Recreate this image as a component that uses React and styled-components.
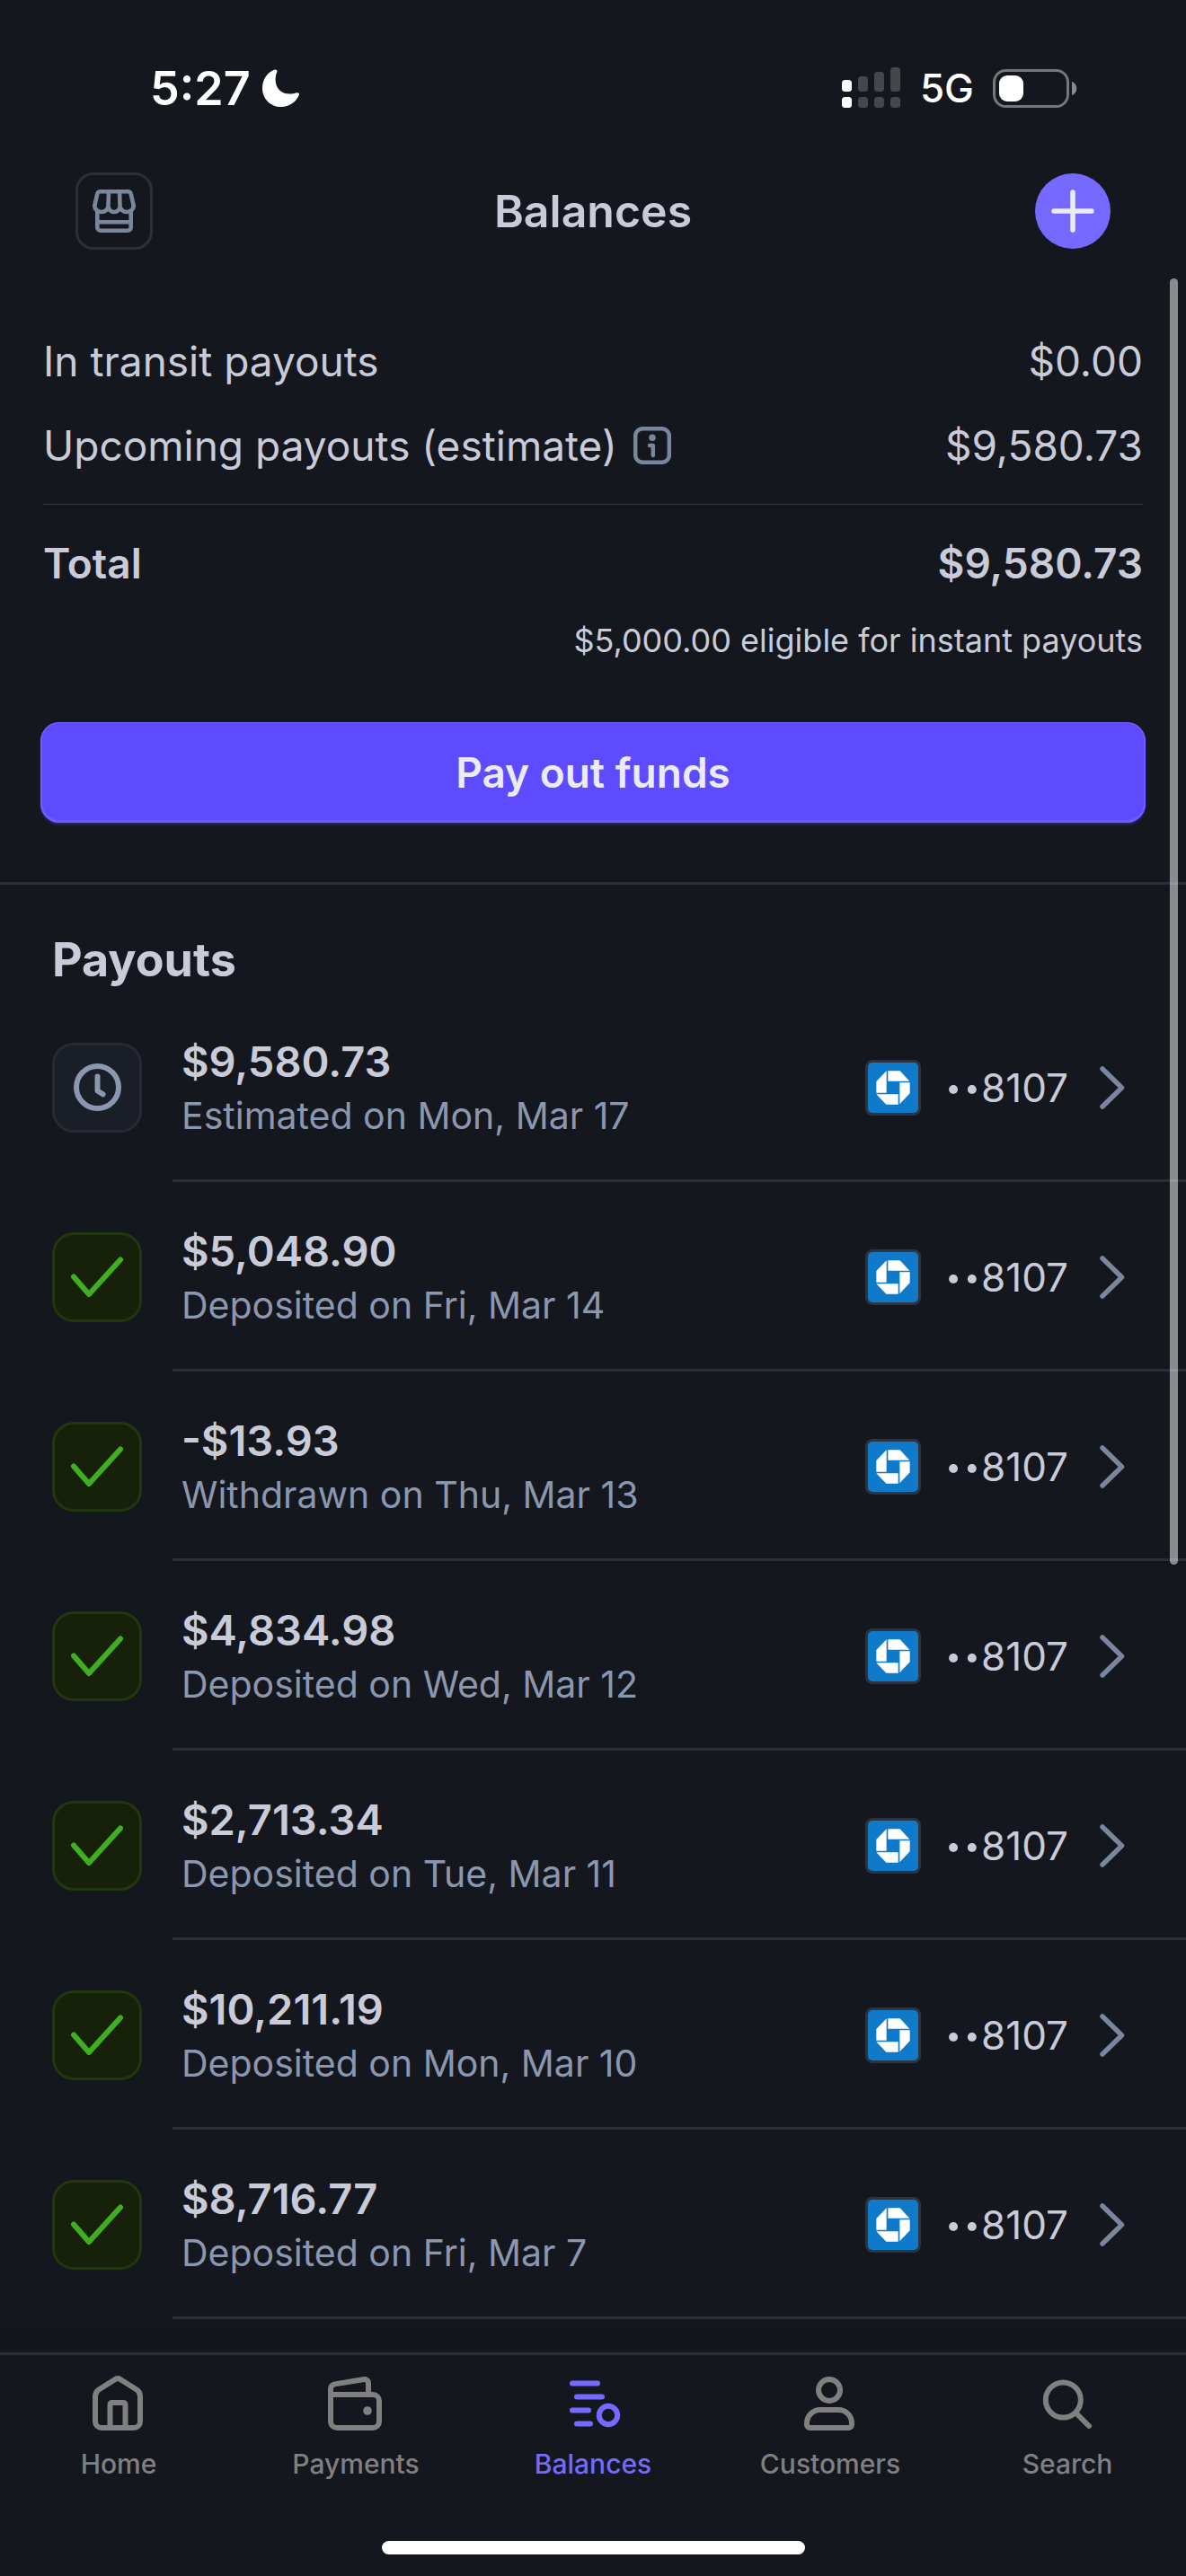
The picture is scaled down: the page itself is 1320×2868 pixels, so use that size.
import React from "react";
import styled, { createGlobalStyle, css } from "styled-components";

const BG = "#14171e";
const LINE = "#2c2f37";
const TEXT = "#c9cbd8";
const MUTED = "#8b97ae";
const ICON = "#7a869b";
const ACCENT = "#7569ff";
const GREY = "#808080";

const GlobalStyle = createGlobalStyle`
  *, *::before, *::after {
    box-sizing: border-box;
  }
  body {
    margin: 0;
    background: ${BG};
    color: ${TEXT};
    font-family: Inter, "Liberation Sans", sans-serif;
  }
  svg {
    display: block;
    flex: none;
  }
`;

const Screen = styled.div`
  min-height: 100vh;
  display: flex;
  flex-direction: column;
`;

const StatusBar = styled.div`
  display: flex;
  justify-content: space-between;
  align-items: center;
  height: 160px;
  padding: 36px 121px 0 167px;
  color: white;
`;

const StatusGroup = styled.div`
  display: flex;
  align-items: center;
  gap: ${props => props.$gap}px;
`;

const Clock = styled.time`
  font-size: 52px;
  font-weight: 600;
`;

const Network = styled.span`
  font-size: 44px;
  font-weight: 500;
`;

const Header = styled.header`
  display: grid;
  grid-template-columns: 1fr auto 1fr;
  align-items: center;
  height: 150px;
  padding: 0 84px;
`;

const Title = styled.h1`
  margin: 0;
  font-size: 50px;
  font-weight: 600;
`;

const roundButton = css`
  display: flex;
  align-items: center;
  justify-content: center;
  padding: 0;
`;

const StoreButton = styled.button`
  ${roundButton}
  width: 86px;
  height: 86px;
  border: 3px solid ${LINE};
  border-radius: 20px;
  background: none;
  color: ${ICON};
`;

const AddButton = styled.button`
  ${roundButton}
  justify-self: end;
  width: 84px;
  height: 84px;
  border: 0;
  border-radius: 50%;
  background: ${ACCENT};
  color: #ebebf5;
`;

const Main = styled.main`
  position: relative;
  flex: 1;
`;

const ScrollThumb = styled.div`
  position: absolute;
  top: 0;
  right: 9px;
  width: 9px;
  height: 62%;
  border-radius: 5px;
  background: rgba(255, 255, 255, 0.5);
`;

const Summary = styled.section`
  padding: 45px 45px 66px;
  border-bottom: 3px solid ${LINE};
`;

const Lines = styled.dl`
  margin: 0;
`;

const Line = styled.div`
  display: flex;
  justify-content: space-between;
  align-items: center;
  height: ${props => (props.$total ? 130 : 94)}px;
  padding: 0 3px;
  font-size: 46px;
  font-weight: ${props => (props.$total ? 600 : 400)};
`;

const Term = styled.dt`
  display: flex;
  align-items: center;
  gap: 18px;
`;

const Value = styled.dd`
  margin: 0;
`;

const Rule = styled.div`
  height: 1px;
  margin: 18px 3px 0;
  background: #3a3b40;
`;

const InfoButton = styled.button`
  padding: 0;
  border: 0;
  background: none;
  color: ${ICON};
`;

const Eligible = styled.p`
  margin: 0;
  padding: 0 3px;
  font-size: 36px;
  line-height: 42px;
  text-align: right;
`;

const PayOutButton = styled.button`
  display: block;
  width: 100%;
  height: 112px;
  margin-top: 70px;
  padding: 0;
  border: 0;
  border-radius: 21px;
  background: #5f4bff;
  box-shadow: inset 0 -1px 0 2px #6b5dff, 0 2px 3px rgba(95, 75, 255, 0.35);
  color: #ebebf5;
  font: 600 46px Inter, "Liberation Sans", sans-serif;
`;

const ListTitle = styled.h2`
  margin: 0;
  padding: 51px 58px 3px;
  font-size: 52px;
  line-height: 66px;
  font-weight: 700;
`;

const List = styled.ul`
  margin: 0;
  padding: 0;
  list-style: none;
`;

const Row = styled.a`
  display: flex;
  align-items: center;
  gap: 34px;
  padding-left: 58px;
  color: inherit;
  text-decoration: none;
`;

const Status = styled.span`
  display: flex;
  align-items: center;
  justify-content: center;
  width: 100px;
  height: 100px;
  border: 3px solid ${props => (props.$done ? "#22360f" : "#272a32")};
  border-radius: 24px;
  background: ${props => (props.$done ? "#172009" : "#1a1e26")};
  color: ${props => (props.$done ? "#3fae20" : MUTED)};
`;

const Body = styled.div`
  flex: 1;
  display: flex;
  justify-content: space-between;
  align-items: center;
  height: 211px;
  padding: 3px 68px 0 10px;
  border-bottom: 3px solid ${LINE};
`;

const Description = styled.div`
  padding-top: 3px;
`;

const Amount = styled.div`
  font-size: 47px;
  line-height: 60px;
  font-weight: 600;
`;

const Detail = styled.div`
  color: ${MUTED};
  font-size: 41px;
  line-height: 60px;
`;

const Account = styled.div`
  display: flex;
  align-items: center;
  font-size: 44px;
`;

const Bank = styled.span`
  display: flex;
  align-items: center;
  justify-content: center;
  width: 62px;
  height: 62px;
  margin-right: 26px;
  border: 3px solid #2d3440;
  border-radius: 8px;
  background: #0f79ca;
  color: white;
`;

const Dots = styled.span`
  font-size: 68px;
  line-height: 60px;
  font-weight: 500;
`;

const Chevron = styled.span`
  margin-left: 35px;
  color: ${ICON};
`;

const TabBar = styled.nav`
  position: relative;
  padding-top: 21px;
  border-top: 3px solid ${LINE};
  background: ${BG};
  box-shadow: 0 0 20px rgba(22, 24, 24, 0.8);
`;

const Tabs = styled.div`
  display: grid;
  grid-template-columns: repeat(5, 1fr);
`;

const Tab = styled.a`
  display: flex;
  flex-direction: column;
  align-items: center;
  gap: 14px;
  color: ${props => (props.$active ? ACCENT : GREY)};
  font-size: 30px;
  line-height: 40px;
  font-weight: 500;
  text-decoration: none;
`;

const HomeIndicator = styled.div`
  width: 471px;
  height: 15px;
  margin: 66px auto 24px;
  border-radius: 8px;
  background: white;
`;

const Icon = ({ size, width = size, height = size, stroke = 6, children }) => (
  <svg
    width={width}
    height={height}
    viewBox={`0 0 ${width} ${height}`}
    fill="none"
    stroke="currentColor"
    strokeWidth={stroke}
    strokeLinecap="round"
    strokeLinejoin="round"
    aria-hidden="true"
  >
    {children}
  </svg>
);

const MoonIcon = () => (
  <svg width="42" height="42" viewBox="0 0 42 42" fill="currentColor">
    <path d="M13 .8c2-1 4 .2 3.3 2.3C15 6 14.6 9 14.6 12c0 9 6.5 15.6 15.5 15.6 3 0 5.5-.6 8-1.3 2-.6 3.4.8 2.6 2.8C37.5 36.8 30 42 21 42 9 42 0 33 0 21.2 0 12 5 4.2 13 .8z" />
  </svg>
);

const SignalIcon = () => (
  <svg width="66" height="46" viewBox="0 0 66 46">
    {[14, 10, 5, 0].map((top, i) => (
      <g key={top} fill={i === 0 ? "white" : "#46474b"}>
        <rect x={i * 18} y={top} width="11" height={27 - top} rx="3.5" />
        <rect x={i * 18} y="33" width="11" height="12" rx="3.5" />
      </g>
    ))}
  </svg>
);

const BatteryIcon = () => (
  <svg width="94" height="43" viewBox="0 0 94 43">
    <rect
      x="1.5"
      y="1.5"
      width="82"
      height="40"
      rx="13"
      fill="none"
      stroke="#76777b"
      strokeWidth="3"
    />
    <rect x="7" y="7" width="27" height="29" rx="9" fill="white" />
    <path d="M88 14c7 2 7 13 0 15z" fill="#8a8b8e" />
  </svg>
);

const StoreIcon = () => (
  <Icon size={48} stroke={4.6}>
    <path d="M2.3 18 5.2 5.2a3.6 3.6 0 0 1 3.5-2.9h30.6a3.6 3.6 0 0 1 3.5 2.9L45.7 18" />
    <path d="M2.3 18a7.6 7 0 0 0 15.2 0L18 2.5M17.5 18.5a6.5 6.5 0 0 0 13 0M30 2.5l.5 15.5a7.6 7 0 0 0 15.2 0" />
    <path d="M5.3 24v18A3.7 3.7 0 0 0 9 45.7h30a3.7 3.7 0 0 0 3.7-3.7V24M5.3 36.3h37.4" />
  </Icon>
);

const InfoIcon = () => (
  <Icon size={42} stroke={4.5}>
    <rect x="2.2" y="2.2" width="37.6" height="37.6" rx="8" />
    <circle cx="21" cy="12.2" r="3.8" fill="currentColor" stroke="none" />
    <path d="M18 21h3.8v11" />
  </Icon>
);

const ClockIcon = () => (
  <Icon size={53}>
    <circle cx="26.5" cy="26.5" r="23.5" />
    <path d="M26.5 14.5v16l6 3.8" />
  </Icon>
);

const CheckIcon = () => (
  <Icon width={58} height={46}>
    <path d="M3 22.5 20 42 55 3.5" />
  </Icon>
);

const ChaseIcon = () => (
  <svg width="38" height="38" viewBox="0 0 114 114" fill="currentColor">
    <path d="M40 1h40l32 34H40zM79 40h34v36l-34 36zM1 79h73v34H34zM35 1v73H1V36z" />
  </svg>
);

const tabs = [
  {
    label: "Home",
    icon: (
      <>
        <path d="M7 25v28a7 7 0 0 0 7 7h36a7 7 0 0 0 7-7V25c0-3-1-5-3.2-7L36 6.8c-2.5-2-5.5-2-8 0L10.2 18C8 20 7 22 7 25z" />
        <path d="M23.5 60V34a2 2 0 0 1 2-2h13a2 2 0 0 1 2 2v26" />
      </>
    )
  },
  {
    label: "Payments",
    icon: (
      <>
        <path d="M5 23v30a7 7 0 0 0 7 7h40a7 7 0 0 0 7-7V30a7 7 0 0 0-7-7z" />
        <path d="M5 26v-9c0-3 2-5 4.5-5.6L41 6.2c3.5-.8 6 1 6 4.3V22" />
        <circle cx="46" cy="41" r="4.8" fill="currentColor" stroke="none" />
      </>
    )
  },
  {
    label: "Balances",
    active: true,
    icon: (
      <>
        <path d="M10 10.5h28M15 25.5h28M10 40.5h18M15 55.5h15" />
        <circle cx="50" cy="46" r="10.2" />
      </>
    )
  },
  {
    label: "Customers",
    icon: (
      <>
        <circle cx="32" cy="18" r="12" />
        <path d="M22 40h20c8.5 0 15 6.5 15 15v1.5a3.5 3.5 0 0 1-3.5 3.5h-43A3.5 3.5 0 0 1 7 56.5V55c0-8.5 6.5-15 15-15z" />
      </>
    )
  },
  {
    label: "Search",
    icon: (
      <>
        <circle cx="28.3" cy="29" r="19.5" />
        <path d="M42.5 43.5 57 58" />
      </>
    )
  }
];

const payouts = [
  { amount: "$9,580.73", detail: "Estimated on Mon, Mar 17", pending: true },
  { amount: "$5,048.90", detail: "Deposited on Fri, Mar 14" },
  { amount: "-$13.93", detail: "Withdrawn on Thu, Mar 13" },
  { amount: "$4,834.98", detail: "Deposited on Wed, Mar 12" },
  { amount: "$2,713.34", detail: "Deposited on Tue, Mar 11" },
  { amount: "$10,211.19", detail: "Deposited on Mon, Mar 10" },
  { amount: "$8,716.77", detail: "Deposited on Fri, Mar 7" }
];

const Payout = ({ amount, detail, pending }) => (
  <li>
    <Row href="#payout">
      <Status $done={!pending}>
        {pending ? <ClockIcon /> : <CheckIcon />}
      </Status>
      <Body>
        <Description>
          <Amount>{amount}</Amount>
          <Detail>{detail}</Detail>
        </Description>
        <Account>
          <Bank>
            <ChaseIcon />
          </Bank>
          <Dots>··</Dots>
          8107
          <Chevron>
            <Icon width={28} height={48} stroke={5.5}>
              <path d="M3 3l21.5 21L3 45" />
            </Icon>
          </Chevron>
        </Account>
      </Body>
    </Row>
  </li>
);

const App = () => (
  <Screen>
    <GlobalStyle />
    <StatusBar>
      <StatusGroup $gap={13}>
        <Clock>5:27</Clock>
        <MoonIcon />
      </StatusGroup>
      <StatusGroup $gap={21}>
        <SignalIcon />
        <Network>5G</Network>
        <BatteryIcon />
      </StatusGroup>
    </StatusBar>
    <Header>
      <StoreButton aria-label="Switch account">
        <StoreIcon />
      </StoreButton>
      <Title>Balances</Title>
      <AddButton aria-label="Add">
        <Icon size={48} stroke={5.5}>
          <path d="M24 3v42M3 24h42" />
        </Icon>
      </AddButton>
    </Header>
    <Main>
      <Summary>
        <Lines>
          <Line>
            <Term>In transit payouts</Term>
            <Value>$0.00</Value>
          </Line>
          <Line>
            <Term>
              Upcoming payouts (estimate)
              <InfoButton aria-label="About this estimate">
                <InfoIcon />
              </InfoButton>
            </Term>
            <Value>$9,580.73</Value>
          </Line>
          <Rule />
          <Line $total>
            <Term>Total</Term>
            <Value>$9,580.73</Value>
          </Line>
        </Lines>
        <Eligible>$5,000.00 eligible for instant payouts</Eligible>
        <PayOutButton>Pay out funds</PayOutButton>
      </Summary>
      <section>
        <ListTitle>Payouts</ListTitle>
        <List>
          {payouts.map(payout => (
            <Payout key={payout.detail} {...payout} />
          ))}
        </List>
      </section>
      <ScrollThumb />
    </Main>
    <TabBar>
      <Tabs>
        {tabs.map(({ label, active, icon }) => (
          <Tab
            key={label}
            href={`#${label.toLowerCase()}`}
            $active={active}
            aria-current={active ? "page" : undefined}
          >
            <Icon size={66}>{icon}</Icon>
            {label}
          </Tab>
        ))}
      </Tabs>
      <HomeIndicator />
    </TabBar>
  </Screen>
);

export default App;
